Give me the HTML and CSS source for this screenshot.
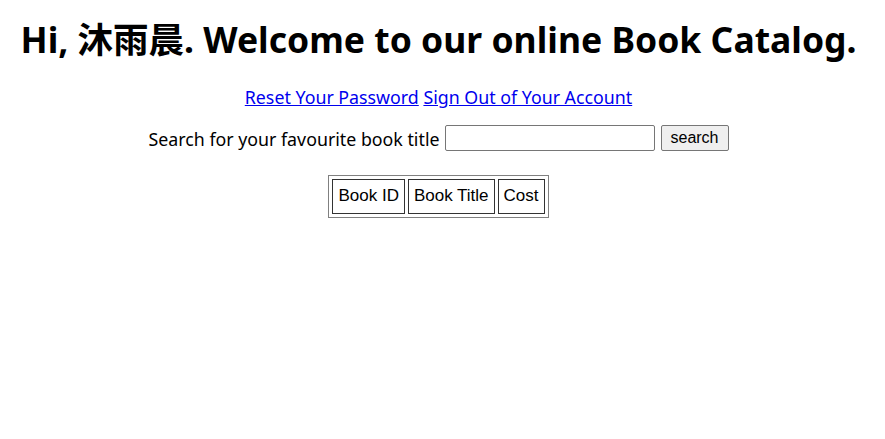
FILE: index.html
```html
<!DOCTYPE html>
<html>
<head>
<meta charset="utf-8">
<link rel="stylesheet" href="styles.css">
</head>
<body>
<h1 class="title">Hi, 沐雨晨. Welcome to our online Book Catalog.</h1>
<p class="links"><a href="#">Reset Your Password</a> <a href="#">Sign Out of Your Account</a></p>
<form class="search">
<label class="label">Search for your favourite book title</label>
<input class="field" type="text">
<button class="btn" type="button">search</button>
</form>
<div class="wrap">
<table class="books">
<tr><td class="cell">Book ID</td><td class="cell">Book Title</td><td class="cell">Cost</td></tr>
</table>
</div>
</body>
</html>
```
FILE: styles.css
```css
body {
  margin: 8px 16px 8px 8px;
  font-family: "Noto Sans", "Noto Sans CJK SC", sans-serif;
  font-size: 17.8px;
  color: #000;
  text-align: center;
}
.title {
  font-size: 35.5px;
  font-weight: bold;
  margin: 8px 0 23px;
  line-height: 1.3;
}
.links {
  margin: 0 0 16px;
  line-height: 24px;
}
.links a {
  color: #0000ee;
}
.search {
  display: flex;
  justify-content: center;
  align-items: center;
  gap: 5px;
  margin: 0 0 24px;
}
.label {
  padding-top: 2px;
}
.field {
  width: 204px;
  height: 20px;
  border: 1px solid #767676;
  border-radius: 2px;
  padding: 2px;
  margin: 0;
}
.btn {
  font-family: "Liberation Sans", Arial, sans-serif;
  font-size: 16px;
  height: 26px;
  width: 68px;
  margin: 0 0 0 1px;
  background: #efefef;
  border: 1px solid #767676;
  border-radius: 2px;
  color: #000;
}
.wrap {
  display: flex;
  justify-content: center;
}
.books {
  border: 1px solid #808080;
  border-spacing: 3px;
  font-family: "Liberation Sans", Arial, sans-serif;
  font-size: 17px;
}
.cell {
  border: 1px solid #333;
  padding: 6px 5px 7px;
  line-height: 20px;
}
```
